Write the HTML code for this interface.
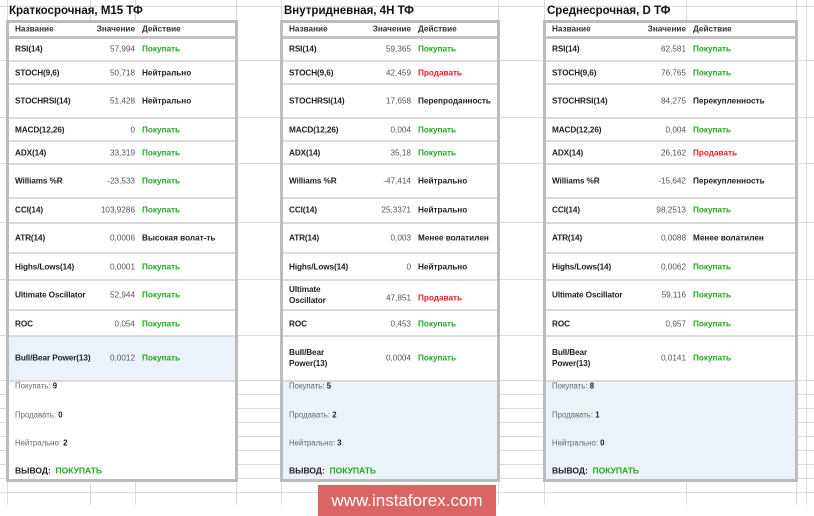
<!DOCTYPE html>
<html><head><meta charset="utf-8"><style>
body{margin:0;width:814px;height:516px;background:#fff;position:relative;overflow:hidden;font-family:"Liberation Sans",Arial,sans-serif;}
.g{position:absolute;background:#d6dbe6;}
.t{position:absolute;top:5px;font-size:11.5px;font-weight:bold;color:#111;white-space:nowrap;}
.p{position:absolute;top:20px;height:456px;border:3px solid #bcbcbc;background:#fff;}
.l{position:absolute;left:0;right:0;height:2px;background:#dadada;}
.c{position:absolute;font-size:8.2px;white-space:nowrap;transform:translateY(-50%);line-height:11px;}
.n{color:#222;font-weight:bold;letter-spacing:-0.1px}
.v{color:#555;text-align:right}
.a{color:#222;font-weight:bold}
.gr{color:#22a822;font-weight:bold}
.rd{color:#ee1c24;font-weight:bold}
.h{color:#333;font-weight:bold}
.s{color:#667;font-size:7.8px}
.s b{color:#222}
.w{position:absolute;left:318px;top:485px;width:178px;height:31px;background:#dd6464;color:#fff;font-size:17px;text-align:center;line-height:31px;}
</style></head><body>
<div class="g" style="left:0;top:6px;width:814px;height:1px"></div>
<div class="g" style="left:0;top:60px;width:814px;height:1px"></div>
<div class="g" style="left:0;top:117px;width:814px;height:1px"></div>
<div class="g" style="left:0;top:163px;width:814px;height:1px"></div>
<div class="g" style="left:0;top:222px;width:814px;height:1px"></div>
<div class="g" style="left:0;top:279px;width:814px;height:1px"></div>
<div class="g" style="left:0;top:335px;width:814px;height:1px"></div>
<div class="g" style="left:0;top:380px;width:814px;height:1px"></div>
<div class="g" style="left:0;top:394px;width:814px;height:1px"></div>
<div class="g" style="left:0;top:408px;width:814px;height:1px"></div>
<div class="g" style="left:0;top:422px;width:814px;height:1px"></div>
<div class="g" style="left:0;top:436px;width:814px;height:1px"></div>
<div class="g" style="left:0;top:450px;width:814px;height:1px"></div>
<div class="g" style="left:0;top:464px;width:814px;height:1px"></div>
<div class="g" style="left:0;top:478px;width:814px;height:1px"></div>
<div class="g" style="left:0;top:492px;width:814px;height:1px"></div>
<div class="g" style="left:7px;top:0;width:1px;height:505px"></div>
<div class="g" style="left:90px;top:0;width:1px;height:505px"></div>
<div class="g" style="left:135px;top:0;width:1px;height:505px"></div>
<div class="g" style="left:236px;top:0;width:1px;height:505px"></div>
<div class="g" style="left:281px;top:0;width:1px;height:505px"></div>
<div class="g" style="left:498px;top:0;width:1px;height:505px"></div>
<div class="g" style="left:544px;top:0;width:1px;height:505px"></div>
<div class="g" style="left:686px;top:0;width:1px;height:505px"></div>
<div class="g" style="left:796px;top:0;width:1px;height:505px"></div>
<div class="g" style="left:806px;top:0;width:1px;height:505px"></div>

<div class="t" style="left:9px">Краткосрочная, M15 ТФ</div>
<div class="t" style="left:284px">Внутридневная, 4H ТФ</div>
<div class="t" style="left:547px">Среднесрочная, D ТФ</div>

<div class="p" style="left:6px;width:226px">
<div style="position:absolute;left:0;right:0;top:312px;height:45px;background:#ebf2f9"></div>
<div class="l" style="top:13px;height:3px;background:#c4c4c4"></div>
<div class="l" style="top:37px"></div><div class="l" style="top:60px"></div><div class="l" style="top:94px"></div><div class="l" style="top:117px"></div><div class="l" style="top:140px"></div><div class="l" style="top:174px"></div><div class="l" style="top:199px"></div><div class="l" style="top:229px"></div><div class="l" style="top:256px"></div><div class="l" style="top:286px"></div><div class="l" style="top:312px"></div><div class="l" style="top:357px"></div>
<div class="c h" style="left:6px;top:6px">Название</div><div class="c h" style="right:100px;top:6px">Значение</div><div class="c h" style="left:133px;top:6px">Действие</div>
<div class="c n" style="left:6px;top:26px">RSI(14)</div><div class="c v" style="right:100px;top:26px">57,994</div><div class="c gr" style="left:133px;top:26px">Покупать</div>
<div class="c n" style="left:6px;top:50px">STOCH(9,6)</div><div class="c v" style="right:100px;top:50px">50,718</div><div class="c a" style="left:133px;top:50px">Нейтрально</div>
<div class="c n" style="left:6px;top:78px">STOCHRSI(14)</div><div class="c v" style="right:100px;top:78px">51,428</div><div class="c a" style="left:133px;top:78px">Нейтрально</div>
<div class="c n" style="left:6px;top:107px">MACD(12,26)</div><div class="c v" style="right:100px;top:107px">0</div><div class="c gr" style="left:133px;top:107px">Покупать</div>
<div class="c n" style="left:6px;top:130px">ADX(14)</div><div class="c v" style="right:100px;top:130px">33,319</div><div class="c gr" style="left:133px;top:130px">Покупать</div>
<div class="c n" style="left:6px;top:158px">Williams %R</div><div class="c v" style="right:100px;top:158px">-23,533</div><div class="c gr" style="left:133px;top:158px">Покупать</div>
<div class="c n" style="left:6px;top:187px">CCI(14)</div><div class="c v" style="right:100px;top:187px">103,9286</div><div class="c gr" style="left:133px;top:187px">Покупать</div>
<div class="c n" style="left:6px;top:215px">ATR(14)</div><div class="c v" style="right:100px;top:215px">0,0006</div><div class="c a" style="left:133px;top:215px">Высокая волат-ть</div>
<div class="c n" style="left:6px;top:244px">Highs/Lows(14)</div><div class="c v" style="right:100px;top:244px">0,0001</div><div class="c gr" style="left:133px;top:244px">Покупать</div>
<div class="c n" style="left:6px;top:272px">Ultimate Oscillator</div><div class="c v" style="right:100px;top:272px">52,944</div><div class="c gr" style="left:133px;top:272px">Покупать</div>
<div class="c n" style="left:6px;top:301px">ROC</div><div class="c v" style="right:100px;top:301px">0,054</div><div class="c gr" style="left:133px;top:301px">Покупать</div>
<div class="c n" style="left:6px;top:335px">Bull/Bear Power(13)</div><div class="c v" style="right:100px;top:335px">0,0012</div><div class="c gr" style="left:133px;top:335px">Покупать</div>
<div class="c s" style="left:6px;top:363px">Покупать: <b>9</b></div>
<div class="c s" style="left:6px;top:392px">Продавать: <b>0</b></div>
<div class="c s" style="left:6px;top:420px">Нейтрально: <b>2</b></div>
<div class="c" style="left:6px;top:448px;font-size:8.5px;font-weight:bold;color:#222">ВЫВОД:&nbsp; <span style="color:#22a822">ПОКУПАТЬ</span></div>
</div>

<div class="p" style="left:280px;width:214px">
<div style="position:absolute;left:0;right:0;top:359px;bottom:0;background:#ebf2f9"></div>
<div class="l" style="top:13px;height:3px;background:#c4c4c4"></div>
<div class="l" style="top:37px"></div><div class="l" style="top:60px"></div><div class="l" style="top:94px"></div><div class="l" style="top:117px"></div><div class="l" style="top:140px"></div><div class="l" style="top:174px"></div><div class="l" style="top:199px"></div><div class="l" style="top:229px"></div><div class="l" style="top:256px"></div><div class="l" style="top:286px"></div><div class="l" style="top:312px"></div><div class="l" style="top:357px"></div>
<div class="c h" style="left:6px;top:6px">Название</div><div class="c h" style="right:86px;top:6px">Значение</div><div class="c h" style="left:135px;top:6px">Действие</div>
<div class="c n" style="left:6px;top:26px">RSI(14)</div><div class="c v" style="right:86px;top:26px">59,365</div><div class="c gr" style="left:135px;top:26px">Покупать</div>
<div class="c n" style="left:6px;top:50px">STOCH(9,6)</div><div class="c v" style="right:86px;top:50px">42,459</div><div class="c rd" style="left:135px;top:50px">Продавать</div>
<div class="c n" style="left:6px;top:78px">STOCHRSI(14)</div><div class="c v" style="right:86px;top:78px">17,658</div><div class="c a" style="left:135px;top:78px">Перепроданность</div>
<div class="c n" style="left:6px;top:107px">MACD(12,26)</div><div class="c v" style="right:86px;top:107px">0,004</div><div class="c gr" style="left:135px;top:107px">Покупать</div>
<div class="c n" style="left:6px;top:130px">ADX(14)</div><div class="c v" style="right:86px;top:130px">35,18</div><div class="c gr" style="left:135px;top:130px">Покупать</div>
<div class="c n" style="left:6px;top:158px">Williams %R</div><div class="c v" style="right:86px;top:158px">-47,414</div><div class="c a" style="left:135px;top:158px">Нейтрально</div>
<div class="c n" style="left:6px;top:187px">CCI(14)</div><div class="c v" style="right:86px;top:187px">25,3371</div><div class="c a" style="left:135px;top:187px">Нейтрально</div>
<div class="c n" style="left:6px;top:215px">ATR(14)</div><div class="c v" style="right:86px;top:215px">0,003</div><div class="c a" style="left:135px;top:215px">Менее волатилен</div>
<div class="c n" style="left:6px;top:244px">Highs/Lows(14)</div><div class="c v" style="right:86px;top:244px">0</div><div class="c a" style="left:135px;top:244px">Нейтрально</div>
<div class="c n" style="left:6px;top:272px">Ultimate<br>Oscillator</div><div class="c v" style="right:86px;top:275px">47,851</div><div class="c rd" style="left:135px;top:275px">Продавать</div>
<div class="c n" style="left:6px;top:301px">ROC</div><div class="c v" style="right:86px;top:301px">0,453</div><div class="c gr" style="left:135px;top:301px">Покупать</div>
<div class="c n" style="left:6px;top:335px">Bull/Bear<br>Power(13)</div><div class="c v" style="right:86px;top:335px">0,0004</div><div class="c gr" style="left:135px;top:335px">Покупать</div>
<div class="c s" style="left:6px;top:363px">Покупать: <b>5</b></div>
<div class="c s" style="left:6px;top:392px">Продавать: <b>2</b></div>
<div class="c s" style="left:6px;top:420px">Нейтрально: <b>3</b></div>
<div class="c" style="left:6px;top:448px;font-size:8.5px;font-weight:bold;color:#222">ВЫВОД:&nbsp; <span style="color:#22a822">ПОКУПАТЬ</span></div>
</div>

<div class="p" style="left:543px;width:249px">
<div style="position:absolute;left:0;right:0;top:359px;bottom:0;background:#ebf2f9"></div>
<div class="l" style="top:13px;height:3px;background:#c4c4c4"></div>
<div class="l" style="top:37px"></div><div class="l" style="top:60px"></div><div class="l" style="top:94px"></div><div class="l" style="top:117px"></div><div class="l" style="top:140px"></div><div class="l" style="top:174px"></div><div class="l" style="top:199px"></div><div class="l" style="top:229px"></div><div class="l" style="top:256px"></div><div class="l" style="top:286px"></div><div class="l" style="top:312px"></div><div class="l" style="top:357px"></div>
<div class="c h" style="left:6px;top:6px">Название</div><div class="c h" style="right:109px;top:6px">Значение</div><div class="c h" style="left:147px;top:6px">Действие</div>
<div class="c n" style="left:6px;top:26px">RSI(14)</div><div class="c v" style="right:109px;top:26px">62,581</div><div class="c gr" style="left:147px;top:26px">Покупать</div>
<div class="c n" style="left:6px;top:50px">STOCH(9,6)</div><div class="c v" style="right:109px;top:50px">76,765</div><div class="c gr" style="left:147px;top:50px">Покупать</div>
<div class="c n" style="left:6px;top:78px">STOCHRSI(14)</div><div class="c v" style="right:109px;top:78px">84,275</div><div class="c a" style="left:147px;top:78px">Перекупленность</div>
<div class="c n" style="left:6px;top:107px">MACD(12,26)</div><div class="c v" style="right:109px;top:107px">0,004</div><div class="c gr" style="left:147px;top:107px">Покупать</div>
<div class="c n" style="left:6px;top:130px">ADX(14)</div><div class="c v" style="right:109px;top:130px">26,162</div><div class="c rd" style="left:147px;top:130px">Продавать</div>
<div class="c n" style="left:6px;top:158px">Williams %R</div><div class="c v" style="right:109px;top:158px">-15,642</div><div class="c a" style="left:147px;top:158px">Перекупленность</div>
<div class="c n" style="left:6px;top:187px">CCI(14)</div><div class="c v" style="right:109px;top:187px">98,2513</div><div class="c gr" style="left:147px;top:187px">Покупать</div>
<div class="c n" style="left:6px;top:215px">ATR(14)</div><div class="c v" style="right:109px;top:215px">0,0088</div><div class="c a" style="left:147px;top:215px">Менее волатилен</div>
<div class="c n" style="left:6px;top:244px">Highs/Lows(14)</div><div class="c v" style="right:109px;top:244px">0,0062</div><div class="c gr" style="left:147px;top:244px">Покупать</div>
<div class="c n" style="left:6px;top:272px">Ultimate Oscillator</div><div class="c v" style="right:109px;top:272px">59,116</div><div class="c gr" style="left:147px;top:272px">Покупать</div>
<div class="c n" style="left:6px;top:301px">ROC</div><div class="c v" style="right:109px;top:301px">0,957</div><div class="c gr" style="left:147px;top:301px">Покупать</div>
<div class="c n" style="left:6px;top:335px">Bull/Bear<br>Power(13)</div><div class="c v" style="right:109px;top:335px">0,0141</div><div class="c gr" style="left:147px;top:335px">Покупать</div>
<div class="c s" style="left:6px;top:363px">Покупать: <b>8</b></div>
<div class="c s" style="left:6px;top:392px">Продавать: <b>1</b></div>
<div class="c s" style="left:6px;top:420px">Нейтрально: <b>0</b></div>
<div class="c" style="left:6px;top:448px;font-size:8.5px;font-weight:bold;color:#222">ВЫВОД:&nbsp; <span style="color:#22a822">ПОКУПАТЬ</span></div>
</div>

<div class="w">www.instaforex.com</div>
</body></html>
